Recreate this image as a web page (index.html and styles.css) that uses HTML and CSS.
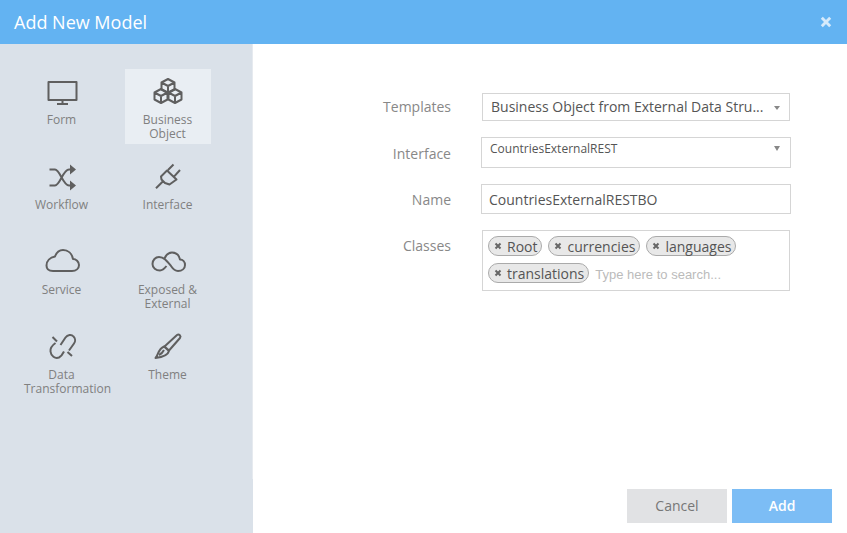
FILE: index.html
```html
<!DOCTYPE html>
<html lang="en">
<head>
<meta charset="utf-8">
<title>Add New Model</title>
<link rel="stylesheet" href="styles.css">
</head>
<body>
<div class="dialog">
  <header class="head">
    <h1 class="title">Add New Model</h1>
    <svg class="close" viewBox="0 0 10 10"><path d="M1.5 1.5l7 7M8.5 1.5l-7 7"/></svg>
  </header>
  <div class="body">
    <aside class="side">
      <div class="types">
        <div class="type">
          <svg class="ico" viewBox="-2 0 36 32"><rect x="2.500" y="6" width="28" height="18"/><path d="M16.500 24v4M11 28h11"/></svg>
          <span class="lbl">Form</span>
        </div>
        <div class="type active">
          <svg class="ico" viewBox="-2 0 36 32"><path d="M16 3l6.500 3.500v7L16 17l-6.500-3.500v-7zM9.500 6.500L16 10l6.500-3.500M16 10v7"/><path d="M9 13l6.500 3.500v7L9 27l-6.500-3.500v-7zM2.500 16.500L9 20l6.500-3.500M9 20v7"/><path d="M23 13l6.500 3.500v7L23 27l-6.500-3.500v-7zM16.500 16.500L23 20l6.500-3.500M23 20v7"/></svg>
          <span class="lbl">Business Object</span>
        </div>
        <div class="type">
          <svg class="ico" viewBox="-2 0 36 32"><path d="M3.500 8.500H9C14 8.500 17 24.500 23 24.500h3M3.500 24.500H9C14 24.500 17 8.500 23 8.500h3"/><path class="fill" d="M24 3.500l6 5-6 5zM24 19.500l6 5-6 5z"/></svg>
          <span class="lbl">Workflow</span>
        </div>
        <div class="type">
          <svg class="ico" viewBox="-2 0 36 32"><path d="M4 27.300L11.300 20M15 9.500L24.500 18.500 17.500 23.500 13 22 9.500 18.500 9 15.500ZM16 9L21.500 3.500M22 15.700L28 9"/></svg>
          <span class="lbl">Interface</span>
        </div>
        <div class="type">
          <svg class="ico" viewBox="-2 0 36 32"><path d="M7 25H26C30 25 33 22.500 33 19C33 15.500 30 13 27 13C26 7.500 22 4 17 4C13 4 10.500 6.500 9 10.500C4 11.500.5 15 .5 19.500C.5 23 3 25 7 25Z"/></svg>
          <span class="lbl">Service</span>
        </div>
        <div class="type">
          <svg class="ico" viewBox="-2 0 36 32"><path d="M14.500 20C12.500 22.500 10.500 24.500 8 24.500C4 24.500 .5 22 .5 18C.5 14 3.500 11 7 11C12 11 15 15 19 20C21 23 23 25 26 25C30 25 33 22.500 33 19C33 16 31 13.500 28 13.500C27 9 24 6.500 20 6.500C16.500 6.500 14 9 12.500 12.500"/></svg>
          <span class="lbl">Exposed &amp; External</span>
        </div>
        <div class="type">
          <svg class="ico" viewBox="-2 0 36 32"><path d="M14.500 14L19.500 6.500C21.500 3.500 25.500 3 27.500 5.500C29.500 7.500 29.500 10.500 28 12.500L23 19.500M9.500 12C6 14.500 4 17 4.500 20.500C5 25 9 28 13 26.500C15 25.500 16.500 23.500 18 20.500M6.500 6l4.500 4.500M21.500 21l4.500 4"/></svg>
          <span class="lbl">Data Transformation</span>
        </div>
        <div class="type">
          <svg class="ico" viewBox="-2 0 36 32"><path d="M25 4C27 2.500 29.500 5 28 7L17 19.500 12.500 15.500ZM12 15.500L17 20C16 24 12 26 3.500 27C6.500 24 6 18 12 15.500Z"/><path d="M7 24c2-1 4-3 5-5"/></svg>
          <span class="lbl">Theme</span>
        </div>
      </div>
      <div class="side-foot"></div>
    </aside>
    <main class="main">
      <form class="form">
        <div class="row row-tpl">
          <label class="label">Templates</label>
          <div class="select tpl"><span class="sel-text">Business Object from External Data Stru...</span><span class="arrow small"></span></div>
        </div>
        <div class="row row-ifc">
          <label class="label">Interface</label>
          <div class="select ifc"><span class="ifc-text">CountriesExternalREST</span><span class="arrow"></span></div>
        </div>
        <div class="row row-name">
          <label class="label">Name</label>
          <div class="input">CountriesExternalRESTBO</div>
        </div>
        <div class="row row-cls">
          <label class="label">Classes</label>
          <div class="tags">
            <span class="chip"><svg class="x" viewBox="0 0 8 8"><path d="M1.500 1.500l5 5M6.500 1.500l-5 5"/></svg>Root</span>
            <span class="chip"><svg class="x" viewBox="0 0 8 8"><path d="M1.500 1.500l5 5M6.500 1.500l-5 5"/></svg>currencies</span>
            <span class="chip"><svg class="x" viewBox="0 0 8 8"><path d="M1.500 1.500l5 5M6.500 1.500l-5 5"/></svg>languages</span>
            <span class="chip"><svg class="x" viewBox="0 0 8 8"><path d="M1.500 1.500l5 5M6.500 1.500l-5 5"/></svg>translations</span>
            <span class="ph">Type here to search...</span>
          </div>
        </div>
      </form>
      <footer class="actions">
        <button class="btn cancel" type="button">Cancel</button>
        <button class="btn add" type="button">Add</button>
      </footer>
    </main>
  </div>
</div>
</body>
</html>
```
FILE: styles.css
```css
* { box-sizing: border-box; }
html, body { margin: 0; height: 100%; background: #fff; }
body { font-family: "Open Sans", sans-serif; color: #666; overflow: hidden; }
.dialog { width: 847px; height: 533px; display: flex; flex-direction: column; }
.head { height: 44px; background: #63b3f2; display: flex; align-items: center; justify-content: space-between; padding: 0 15px 0 14px; flex: none; }
.title { margin: 0; font-size: 18px; font-weight: 500; color: #fff; line-height: 44px; }
.close { width: 12px; height: 12px; margin-top: -1px; }
.close path { stroke: #d6eafb; stroke-width: 2.4; fill: none; }
.body { flex: 1; display: flex; min-height: 0; }
.side { width: 253px; flex: none; display: flex; flex-direction: column; }
.types { flex: 1; background: #dae1e9; border-right: 1px solid #e6eaef; padding: 25px 0 0 18.5px; display: grid; grid-template-columns: 86px 86px; column-gap: 20px; grid-auto-rows: 75px; row-gap: 10px; align-content: start; }
.side-foot { height: 54px; background: #dae1e9; flex: none; }
.type { display: flex; flex-direction: column; align-items: center; padding: 7px 5.5px 0; text-align: center; }
.type.active { background: #e9eef3; }
.ico { width: 36px; height: 32px; flex: none; overflow: visible; }
.ico path, .ico rect { fill: none; stroke: #5f5f5f; stroke-width: 2; stroke-linejoin: round; }
.ico path.fill { fill: #5f5f5f; stroke: none; }
.lbl { display: block; width: 75px; margin-top: 5px; font-size: 12px; line-height: 14px; color: #808080; }
.main { flex: 1; display: flex; flex-direction: column; justify-content: space-between; padding: 49px 15px 10px 0; }
.form { display: flex; flex-direction: column; }
.row { display: flex; }
.label { width: 198px; margin-right: 30px; flex: none; text-align: right; font-size: 14px; color: #888; }
.row-tpl { height: 28px; margin-bottom: 16px; }
.row-tpl .label { line-height: 28px; }
.row-ifc { height: 31px; margin-bottom: 16px; }
.row-ifc .label { line-height: 34px; }
.row-name { height: 30px; margin-bottom: 16px; }
.row-name .label { line-height: 32px; }
.row-cls .label { line-height: 31px; }
.select { border: 1px solid #d5d5d5; background: #fff; display: flex; justify-content: space-between; }
.tpl { width: 308px; margin-left: 1px; align-items: center; padding: 0 8px 0 8px; }
.sel-text { font-size: 14px; line-height: 24px; color: #555; white-space: nowrap; }
.ifc { width: 310px; padding: 3px 9px 0 8px; }
.ifc-text { font-size: 12px; line-height: 16px; color: #555; }
.arrow { width: 0; height: 0; border-left: 3.5px solid transparent; border-right: 3.5px solid transparent; border-top: 5px solid #888; margin-top: 5px; margin-right: 1px; }
.arrow.small { border-left-width: 3px; border-right-width: 3px; border-top-width: 4px; margin: 1px 1px 0 0; }
.input { width: 310px; border: 1px solid #d5d5d5; padding: 0 7px; font-size: 14px; line-height: 29px; color: #555; }
.tags { width: 308px; height: 61px; margin-left: 1px; border: 1px solid #d5d5d5; padding: 5px 5px 0; display: flex; flex-wrap: wrap; align-content: flex-start; column-gap: 6px; row-gap: 7px; }
.chip { height: 20px; display: inline-flex; align-items: center; padding: 1px 4px 0 5px; border: 1px solid #aaa; border-radius: 10px; background: #e8e8e8; font-size: 14px; color: #555; line-height: 18px; white-space: nowrap; }
.x { width: 8px; height: 8px; margin: -1px 5.5px 0 -.5px; flex: none; }
.x path { stroke: #666; stroke-width: 2; fill: none; }
.ph { font-family: "Liberation Sans", Arial, sans-serif; font-size: 13px; line-height: 24px; color: #bbb; }
.actions { display: flex; justify-content: flex-end; gap: 5px; }
.btn { width: 100px; height: 34px; border: 0; padding: 0 0 2px; font-family: inherit; font-size: 14px; }
.cancel { background: #e1e2e4; color: #777; }
.add { background: #7cbdf5; color: #fff; font-weight: 600; }
```
